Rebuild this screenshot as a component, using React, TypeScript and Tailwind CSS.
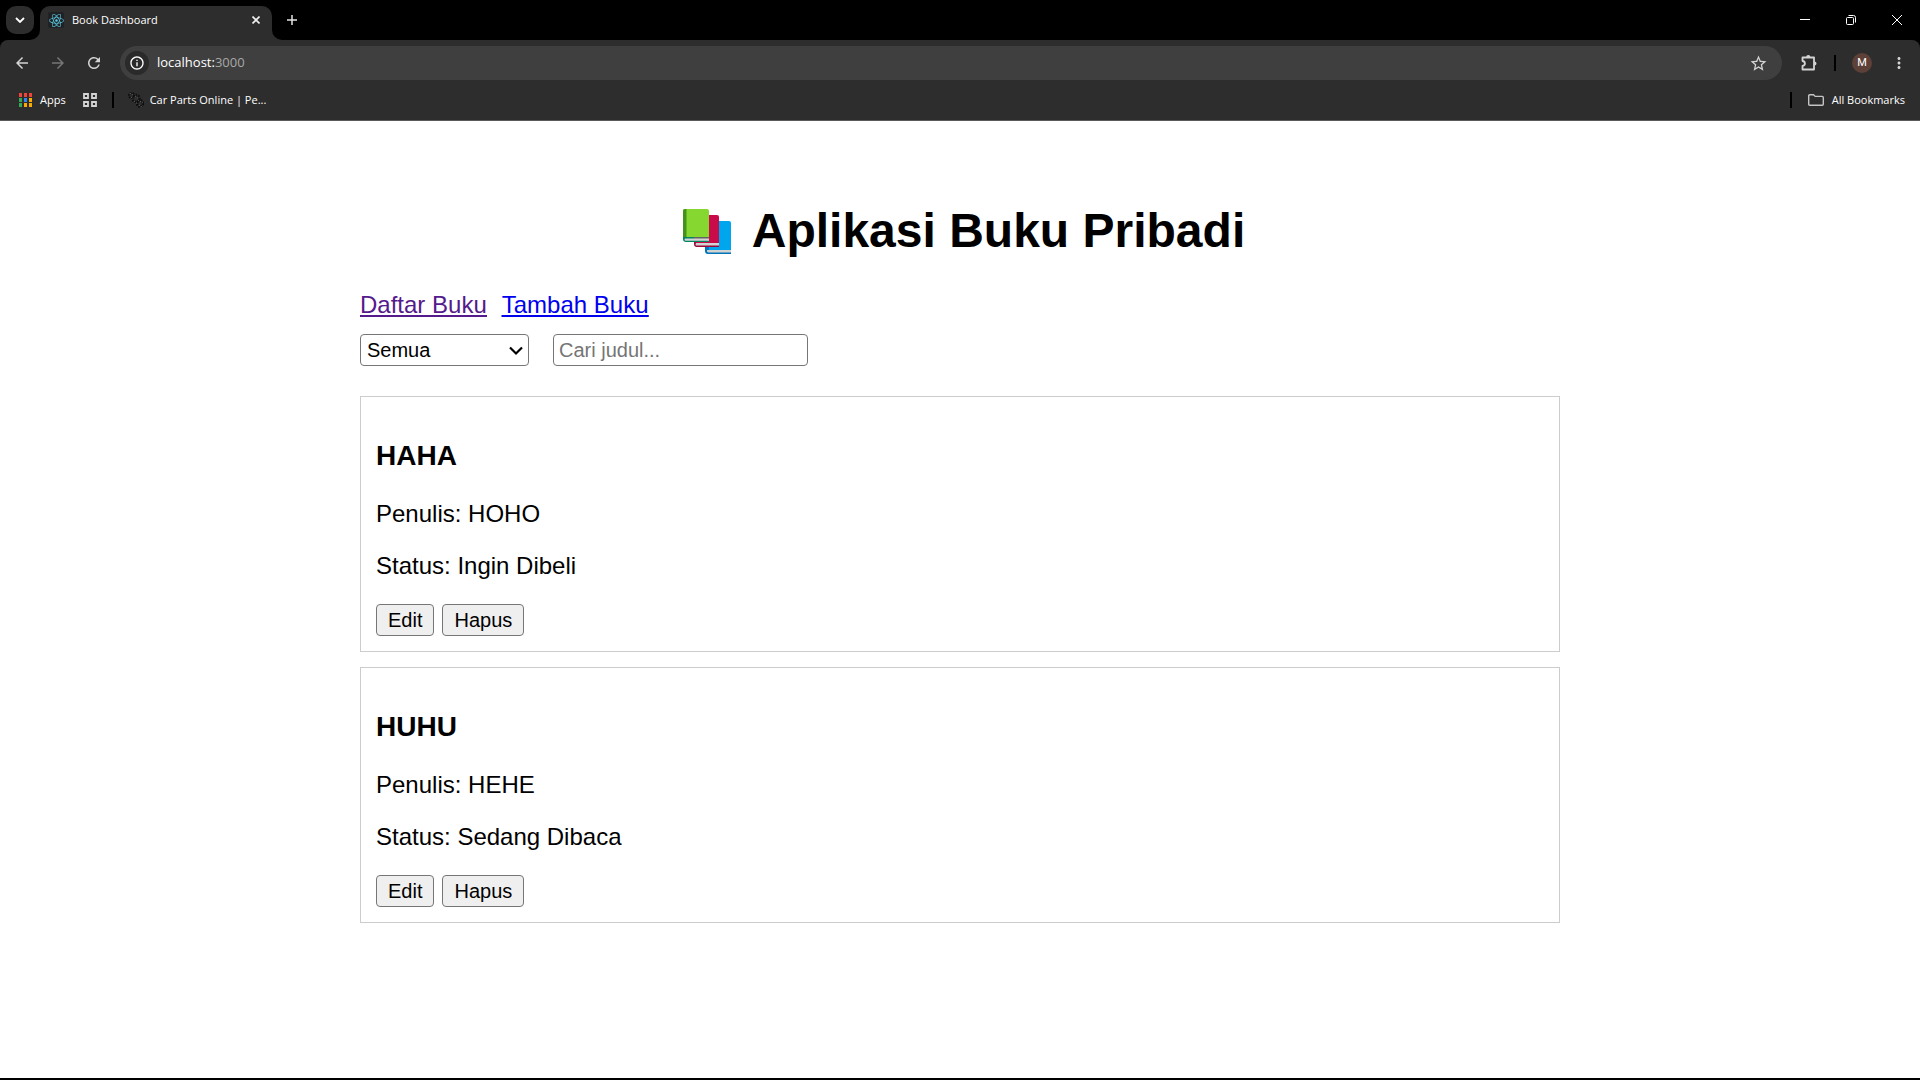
import {
  MdArrowBack,
  MdArrowForward,
  MdInfoOutline,
  MdMoreVert,
  MdRefresh,
  MdStarBorder,
} from "react-icons/md";
import { FaReact } from "react-icons/fa";

type Book = { id: number; title: string; author: string; status: string };

const books: Book[] = [
  { id: 1, title: "HAHA", author: "HOHO", status: "Ingin Dibeli" },
  { id: 2, title: "HUHU", author: "HEHE", status: "Sedang Dibaca" },
];

const appDots = [
  "#f04438", "#f04438", "#f04438",
  "#34a853", "#2f86f6", "#f9ab00",
  "#34a853", "#f9ab00", "#f9ab00",
];

function AppsIcon() {
  return (
    <svg width="14" height="14" viewBox="0 0 14 14" aria-hidden="true">
      {appDots.map((fill, i) => (
        <rect key={i} x={(i % 3) * 5} y={Math.floor(i / 3) * 5} width="3" height="4" fill={fill} />
      ))}
    </svg>
  );
}

function GridIcon() {
  return (
    <svg width="14" height="14" viewBox="0 0 14 14" fill="none" stroke="#d4d4d4" strokeWidth="1.800" aria-hidden="true">
      <path d="M1 1h4v4H1zM9 1h4v4H9zM1 9h4v4H1zM9 9h4v4H9z" />
    </svg>
  );
}

function GearsIcon() {
  return (
    <svg width="16" height="16" viewBox="0 0 16 16" fill="none" aria-hidden="true">
      <circle cx="3.500" cy="3.500" r="2.500" stroke="#0c0c0c" strokeWidth="2" strokeDasharray="1.5 1" />
      <circle cx="8" cy="6.500" r="3.500" stroke="#111" strokeWidth="2.500" strokeDasharray="1.600 1" />
      <circle cx="12" cy="11.500" r="3" stroke="#0c0c0c" strokeWidth="2.500" strokeDasharray="1.400 1" />
      <path d="M2 1l3 2M3 5l2 2M7 4l4 3M6 9l4 3M10 8l5 3M11 13l3 2" stroke="#6a6a6a" strokeDasharray="1 1.500" />
    </svg>
  );
}

function PuzzleIcon() {
  return (
    <svg width="18" height="18" viewBox="0 0 18 18" aria-hidden="true">
      <path
        d="M2.500 3.500h11.500v12H2.500v-3.500c3.200-.4 3.200-4.600 0-5z"
        fill="none"
        stroke="#d4d4d4"
        strokeWidth="1.800"
        strokeLinejoin="round"
      />
      <path d="M6.200 3.200a2.100 2.100 0 0 1 4.200 0zM14.400 7.400a2.100 2.100 0 0 1 0 4.200z" fill="#d4d4d4" />
    </svg>
  );
}

function FolderIcon() {
  return (
    <svg width="16" height="12" viewBox="0 0 16 12" fill="none" stroke="#c4c4c4" strokeWidth="1.400" aria-hidden="true">
      <path d="M.7 10.300V1.700c0-.6.4-1 1-1h3.800l1.700 1.700h7.100c.6 0 1 .4 1 1v6.900c0 .6-.4 1-1 1H1.700c-.6 0-1-.4-1-1z" />
    </svg>
  );
}

function BooksIcon() {
  return (
    <svg width="49" height="48" viewBox="0 -2 49 48" role="img" aria-label="Buku">
      <path d="M24 12h22a2 2 0 0 1 2 2v29H23z" fill="#00a6ed" />
      <path d="M22 34v8c0 2 1 3 3 3h23v-2H26v-9z" fill="#0074ba" />
      <path d="M25 41h23v2.400H25.500c-2 0-2-2.400-.5-2.400z" fill="#d3d3d3" />
      <path d="M14 6h20a2 2 0 0 1 2 2v27H12z" fill="#ca0b4a" />
      <path d="M11 30v5c0 2 1 3 3 3h22v-2H14z" fill="#990838" />
      <path d="M14 34h22v2.600H14c-2 0-2-2.600 0-2.600z" fill="#d3d3d3" />
      <path d="M2 0h22a2 2 0 0 1 2 2v27H0V2a2 2 0 0 1 2-2z" fill="#86d72f" />
      <path d="M2 0h1.500v28H0V2a2 2 0 0 1 2-2z" fill="#44911b" />
      <path d="M0 28h26v5H3c-2 0-3-1-3-3z" fill="#008463" />
      <path d="M11 28h15v2H11z" fill="#636363" />
      <path d="M3 29.500h23v2.300H3c-2 0-2-2.300 0-2.300z" fill="#d3d3d3" />
    </svg>
  );
}

function TabFlare({ side }: { side: "left" | "right" }) {
  return (
    <svg width="10" height="10" viewBox="0 0 10 10" fill="#2d2d2d" aria-hidden="true">
      <path d={side === "left" ? "M10 0v10H0A10 10 0 0 0 10 0z" : "M0 0v10h10A10 10 0 0 1 0 0z"} />
    </svg>
  );
}

function BrowserChrome() {
  return (
    <header className="border-b border-[#5a5a5a] bg-black font-['Open_Sans','Noto_Sans',sans-serif] text-[11px] text-white">
      <div className="flex h-10 items-end justify-between">
        <div className="flex items-end">
          <button aria-label="Cari tab" className="mb-1.5 ml-1.5 flex size-7 items-center justify-center rounded-[10px] bg-[#2d2d2d]">
            <svg width="10" height="6" viewBox="0 0 10 6" fill="none" stroke="white" strokeWidth="1.800">
              <path d="M1 1l4 4 4-4" />
            </svg>
          </button>
          <div className="-ml-1 flex items-end">
            <TabFlare side="left" />
            <div className="flex h-[34px] w-[232px] items-center rounded-t-[10px] bg-[#2d2d2d] pr-2 pb-1.5 pl-2">
              <span className="flex size-4 items-center justify-center rounded-xs bg-[#202124] text-[#58c4dc]">
                <FaReact size={15} />
              </span>
              <span className="ml-2 grow whitespace-nowrap">Book Dashboard</span>
              <button aria-label="Tutup tab" className="flex size-4 items-center justify-center">
                <svg width="8" height="8" viewBox="0 0 8 8" stroke="#f0f0f0" strokeWidth="1.600">
                  <path d="M.5.500l7 7M7.500.500l-7 7" />
                </svg>
              </button>
            </div>
            <TabFlare side="right" />
          </div>
          <button aria-label="Tab baru" className="mb-3 ml-0.5 flex size-4 items-center justify-center">
            <svg width="10" height="10" viewBox="0 0 10 10" stroke="#e4e4e4" strokeWidth="1.500">
              <path d="M0 5h10M5 0v10" />
            </svg>
          </button>
        </div>
        <div className="flex h-10 items-center gap-9 pr-[18px]">
          <button aria-label="Minimalkan">
            <svg width="10" height="10" viewBox="0 0 10 10" stroke="white"><path d="M0 4.500h10" /></svg>
          </button>
          <button aria-label="Pulihkan">
            <svg width="10" height="10" viewBox="0 0 10 10" stroke="white" fill="none">
              <rect x=".5" y="2.500" width="7" height="7" rx="1" />
              <path d="M2.500.5h5a2 2 0 0 1 2 2v5" />
            </svg>
          </button>
          <button aria-label="Tutup">
            <svg width="10" height="10" viewBox="0 0 10 10" stroke="white"><path d="M0 0l10 10M10 0L0 10" /></svg>
          </button>
        </div>
      </div>

      <div className="rounded-t-lg bg-[#2d2d2d]">
        <div className="flex items-center pt-1.5 pr-3 text-[#d4d4d4]">
          <nav className="flex items-center gap-[18px] pl-[13px]" aria-label="Navigasi">
            <button aria-label="Kembali"><MdArrowBack size={18} /></button>
            <button aria-label="Maju" className="text-[#757575]"><MdArrowForward size={18} /></button>
            <button aria-label="Muat ulang"><MdRefresh size={18} /></button>
          </nav>
          <div className="ml-[17px] flex h-[34px] grow items-center rounded-full bg-[#3f3f3f] pr-3.5 pl-[5px]">
            <span className="flex size-6 items-center justify-center rounded-full bg-[#2a2a2a] text-white">
              <MdInfoOutline size={16} />
            </span>
            <span className="ml-2 grow text-[13px] text-white">
              localhost:<span className="text-[#a8a8a8]">3000</span>
            </span>
            <button aria-label="Tandai halaman"><MdStarBorder size={19} /></button>
          </div>
          <button aria-label="Ekstensi" className="ml-[18px]"><PuzzleIcon /></button>
          <span className="ml-4 h-4 w-0.5 bg-black" />
          <button aria-label="Profil" className="ml-4 flex size-5 items-center justify-center rounded-full bg-[#5d4037] font-['Roboto',sans-serif] text-[11px] text-white">
            M
          </button>
          <button aria-label="Menu" className="ml-[18px]"><MdMoreVert size={18} /></button>
        </div>
        <div className="flex h-10 items-center pr-[15px] pl-[19px]">
          <a href="#apps" className="flex items-center gap-[7px]"><AppsIcon />Apps</a>
          <button aria-label="Grup tab" className="ml-[17px]"><GridIcon /></button>
          <span className="ml-[15px] h-4 w-0.5 bg-black" />
          <a href="#car-parts" className="ml-[14px] flex items-center gap-1.5"><GearsIcon />Car Parts Online | Pe...</a>
          <span className="ml-auto h-4 w-0.5 bg-black" />
          <button className="ml-4 flex items-center gap-2"><FolderIcon />All Bookmarks</button>
        </div>
      </div>
    </header>
  );
}

function CardButton({ children }: { children: string }) {
  return (
    <button className="h-8 rounded-[4px] border border-[#767676] bg-[#efefef] px-[11px] text-xl leading-7">
      {children}
    </button>
  );
}

function BookCard({ book }: { book: Book }) {
  return (
    <article className="border border-[#ccc] p-[15px]">
      <h3 className="mt-7 text-[28px] leading-8 font-bold">{book.title}</h3>
      <p className="mt-7 leading-7">Penulis: {book.author}</p>
      <p className="mt-6 leading-7">Status: {book.status}</p>
      <div className="mt-6 flex gap-2">
        <CardButton>Edit</CardButton>
        <CardButton>Hapus</CardButton>
      </div>
    </article>
  );
}

export default function App() {
  return (
    <div className="flex min-h-screen flex-col border-b-2 border-black bg-white">
      <BrowserChrome />
      <main className="mx-auto w-full max-w-[1200px] grow pt-[82px] pb-8 font-['Liberation_Sans',Arial,sans-serif] text-2xl leading-7 text-black">
        <h1 className="flex items-center justify-center gap-5 pl-2 text-5xl leading-[56px] font-bold">
          <BooksIcon />
          Aplikasi Buku Pribadi
        </h1>
        <nav className="mt-8 flex gap-[15px] underline">
          <a href="#daftar" className="text-[#551a8b]">Daftar Buku</a>
          <a href="#tambah" className="text-[#0000ee]">Tambah Buku</a>
        </nav>
        <div className="mt-[15px] flex gap-6 text-xl">
          <div className="relative">
            <select aria-label="Status" className="h-8 w-[169px] appearance-none rounded-[4px] border border-[#767676] bg-white pl-1.5 leading-7">
              <option>Semua</option>
              <option>Ingin Dibeli</option>
              <option>Sedang Dibaca</option>
            </select>
            <svg className="pointer-events-none absolute top-3 right-1.5" width="14" height="10" viewBox="0 0 14 10" fill="none" stroke="black" strokeWidth="2.200">
              <path d="M1 1.500l6 6 6-6" />
            </svg>
          </div>
          <input aria-label="Cari judul" placeholder="Cari judul..." className="h-8 w-[255px] rounded-[4px] border border-[#767676] px-[5px] placeholder:text-[#757575]" />
        </div>
        <div className="mt-[30px] flex flex-col gap-[15px]">
          {books.map((book) => (
            <BookCard key={book.id} book={book} />
          ))}
        </div>
      </main>
    </div>
  );
}
